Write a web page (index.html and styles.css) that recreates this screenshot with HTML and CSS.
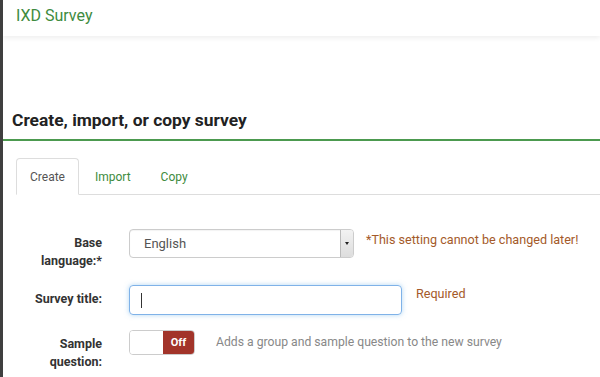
FILE: index.html
```html
<!DOCTYPE html>
<html>
<head>
<meta charset="utf-8">
<link rel="stylesheet" href="styles.css">
</head>
<body>
<div class="page">
  <header class="topbar"><span class="brand">IXD Survey</span></header>
  <div class="content">
    <h1 class="title">Create, import, or copy survey</h1>
    <ul class="tabs">
      <li class="tab active">Create</li>
      <li class="tab">Import</li>
      <li class="tab">Copy</li>
    </ul>
    <div class="form">
      <div class="row">
        <label class="label">Base<br>language:*</label>
        <div class="select"><span class="select-text">English</span><span class="select-arrow"></span></div>
        <span class="note warn n1">*This setting cannot be changed later!</span>
      </div>
      <div class="row">
        <label class="label">Survey title:</label>
        <div class="input"><span class="caret"></span></div>
        <span class="note warn n2">Required</span>
      </div>
      <div class="row">
        <label class="label">Sample<br>question:</label>
        <div class="toggle"><span class="toggle-on"></span><span class="toggle-off">Off</span></div>
        <span class="note help">Adds a group and sample question to the new survey</span>
      </div>
    </div>
  </div>
</div>
</body>
</html>
```
FILE: styles.css
```css
* { box-sizing: border-box; }
html, body { margin: 0; padding: 0; background: #fff; }
body { font-family: Roboto, "Liberation Sans", Arial, sans-serif; color: #333; }
.page {
  min-height: 377px;
  border-left: 3px solid #3f3f3f;
  overflow: hidden;
}
.topbar {
  height: 36px;
  padding: 6px 0 0 13px;
  background: #fff;
  box-shadow: 0 2px 5px rgba(0,0,0,0.07);
}
.brand { color: #3e8b40; font-size: 16px; line-height: 20px; }
.content { padding-top: 73px; }
.title {
  margin: 0;
  padding: 0 0 8px 9px;
  font-size: 17.4px;
  font-weight: 700;
  color: #222;
  line-height: 22px;
  border-bottom: 2px solid #4c9a4f;
}
.tabs {
  list-style: none;
  margin: 17px 0 0 13px;
  padding: 0;
  display: flex;
  border-bottom: 1px solid #ddd;
  height: 37px;
}
.tab {
  font-size: 12px;
  color: #3e8b40;
  padding: 11px 13px 0 13px;
  margin-right: 2px;
  border: 1px solid transparent;
  border-radius: 4px 4px 0 0;
}
.tab.active {
  color: #555;
  border-color: #ddd;
  border-bottom-color: #fff;
  height: 37px;
  background: #fff;
}
.form { padding-top: 34px; }
.row {
  display: flex;
  align-items: flex-start;
  margin-bottom: 15px;
}
.label {
  width: 99px;
  flex: none;
  margin-right: 27px;
  text-align: right;
  font-size: 12.5px;
  font-weight: 700;
  line-height: 18px;
  color: #333;
  padding-top: 5px;
}
.select {
  width: 225px;
  height: 29px;
  flex: none;
  border: 1px solid #ccc;
  border-radius: 4px;
  display: flex;
  align-items: center;
  justify-content: space-between;
  box-shadow: inset 0 1px 1px rgba(0,0,0,0.05);
}
.select-text { font-size: 13px; color: #555; padding-left: 14px; }
.select-arrow {
  width: 13px;
  height: 27px;
  background: linear-gradient(#f2f2f2, #ddd);
  border-left: 1px solid #bbb;
  border-radius: 0 3px 3px 0;
  position: relative;
}
.select-arrow::after {
  content: "";
  position: absolute;
  left: 4px;
  top: 12px;
  border-left: 2.5px solid transparent;
  border-right: 2.5px solid transparent;
  border-top: 3px solid #222;
}
.note { font-size: 12.6px; line-height: 18px; white-space: nowrap; }
.warn { color: #a45a2a; }
.n1 { margin-left: 12px; padding-top: 2px; }
.n2 { margin-left: 14px; padding-top: 0; }
.help { color: #888; font-size: 12.2px; padding-top: 3px; margin-left: 21px; }
.input {
  width: 273px;
  height: 30px;
  flex: none;
  border: 1px solid #7fb2e8;
  border-radius: 4px;
  box-shadow: 0 0 5px rgba(102,175,233,0.5);
  display: flex;
  align-items: center;
  padding-left: 11px;
}
.caret { width: 1px; height: 15px; background: #333; }
.toggle {
  width: 66px;
  height: 25px;
  flex: none;
  border: 1px solid #ccc;
  border-radius: 4px;
  display: flex;
  overflow: hidden;
}
.toggle-on { width: 33px; background: #fff; }
.toggle-off {
  flex: 1;
  background: #a2342a;
  color: #fff;
  font-size: 11px;
  font-weight: 700;
  display: flex;
  align-items: center;
  justify-content: center;
}
```
